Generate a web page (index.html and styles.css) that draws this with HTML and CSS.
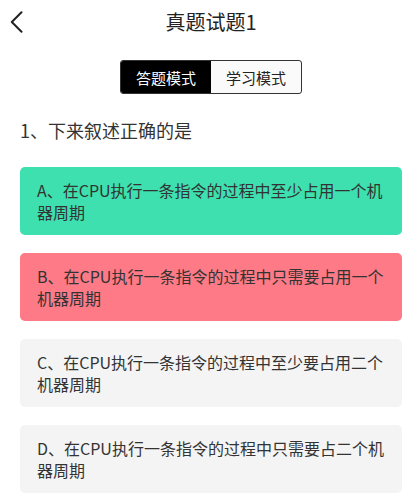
FILE: index.html
```html
<!DOCTYPE html>
<html lang="zh-CN">
<head>
<meta charset="utf-8">
<title>真题试题1</title>
<link rel="stylesheet" href="styles.css">
</head>
<body>
<header class="header">
  <a class="back" href="#" aria-label="返回">
    <svg width="13" height="22" viewBox="0 0 13 22"><path d="M11.5 1.2 L1.8 11 L11.5 20.8" fill="none" stroke="#222" stroke-width="2" stroke-linecap="round" stroke-linejoin="round"/></svg>
  </a>
  <h1 class="title">真题试题1</h1>
  <span></span>
</header>
<main class="content">
  <div class="tabs">
    <div class="tab active">答题模式</div>
    <div class="tab">学习模式</div>
  </div>
  <p class="question">1、下来叙述正确的是</p>
  <ul class="options">
    <li class="option correct">A、在CPU执行一条指令的过程中至少占用一个机器周期</li>
    <li class="option wrong">B、在CPU执行一条指令的过程中只需要占用一个机器周期</li>
    <li class="option">C、在CPU执行一条指令的过程中至少要占用二个机器周期</li>
    <li class="option">D、在CPU执行一条指令的过程中只需要占二个机器周期</li>
  </ul>
</main>
</body>
</html>
```
FILE: styles.css
```css
* { box-sizing: border-box; }
html, body {
  margin: 0;
  padding: 0;
  background: #fff;
  font-family: "Noto Sans CJK SC", "Noto Sans", sans-serif;
  color: #333;
}
.header {
  height: 44px;
  padding-left: 8px;
  display: grid;
  grid-template-columns: 1fr auto 1fr;
  align-items: center;
}
.back {
  display: flex;
  align-items: center;
  margin-left: 2px;
  width: 13px;
}
.title {
  margin: 0;
  font-size: 20px;
  font-weight: 400;
  color: #222;
  line-height: 28px;
}
.content {
  padding: 0 12px 0 20px;
}
.tabs {
  margin: 16px auto 0;
  width: 182px;
  height: 34px;
  display: flex;
  border: 1.5px solid #333;
  border-radius: 3px;
  overflow: hidden;
  background: #fafafa;
}
.tab {
  flex: 1;
  display: flex;
  align-items: center;
  justify-content: center;
  font-size: 15px;
  color: #222;
}
.tab.active {
  background: #000;
  color: #fff;
}
.question {
  margin: 23px 0 0;
  font-size: 18px;
  line-height: 26px;
  color: #333;
}
.options {
  list-style: none;
  margin: 24px 0 0;
  padding: 0;
  display: flex;
  flex-direction: column;
  gap: 18px;
}
.option {
  height: 68px;
  padding: 12px 17px;
  border-radius: 5px;
  background: #f4f4f4;
  font-size: 16px;
  line-height: 22px;
  color: #333;
}
.option.correct { background: #3de0ae; }
.option.wrong { background: #fd7a86; }
```
